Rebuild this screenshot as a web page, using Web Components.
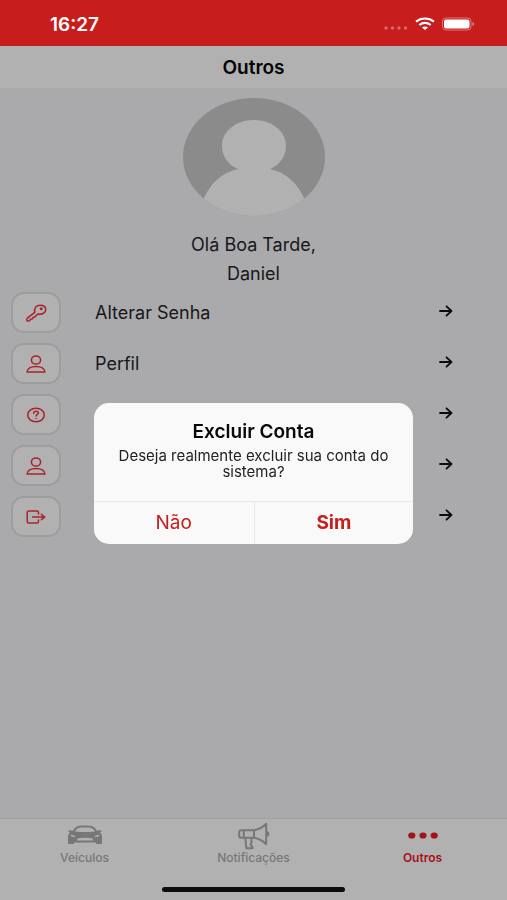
<!DOCTYPE html>
<html lang="pt-BR">
<head>
<meta charset="utf-8">
<meta name="viewport" content="width=device-width, initial-scale=1">
<title>Outros</title>
<style>
    body {
        margin: 0;
        font-family: Inter, "Liberation Sans", sans-serif;
        --red: #c71d1d;
        --dim-red: #a8232b;
        --surface: #b1b1b1;
        --ink: #17171a;
    }
</style>
</head>
<body>
<app-screen>
    <status-bar slot="status" time="16:27"></status-bar>
    <title-bar slot="title">Outros</title-bar>
    <user-greeting>
        <span>Olá Boa Tarde,</span>
        <span>Daniel</span>
    </user-greeting>
    <option-list>
        <option-row icon="key">Alterar Senha</option-row>
        <option-row icon="person">Perfil</option-row>
        <option-row icon="help" label="Ajuda"></option-row>
        <option-row icon="person" label="Excluir Conta"></option-row>
        <option-row icon="exit" label="Sair"></option-row>
    </option-list>
    <tab-bar slot="tabs">
        <tab-item icon="car">Veículos</tab-item>
        <tab-item icon="megaphone">Notificações</tab-item>
        <tab-item icon="dots" active>Outros</tab-item>
    </tab-bar>
    <confirm-dialog slot="dialog">
        <span slot="title">Excluir Conta</span>
        Deseja realmente excluir sua conta do sistema?
        <span slot="cancel">Não</span>
        <span slot="accept">Sim</span>
    </confirm-dialog>
</app-screen>

<script>
// Line icons, drawn with currentColor
const icons = {
    key: `<svg width="22" height="20" viewBox="0 0 22 20" fill="none" stroke="currentColor" stroke-width="1.5" stroke-linejoin="round">
        <path d="M9.800 9.300C8.800 5.500 11 2.200 15 2.200c3.300 0 5.700 1.700 5.700 4.300 0 3.300-3.200 5.200-7.400 4.500l-2 1.300-1.300 1.600-1.800.3-.6 1.600-1.800.2L4.500 17.800 2 18c-.5-1.200-.4-2.200.3-2.800z"/>
        <circle cx="16.200" cy="5.800" r="1.500" fill="currentColor" stroke="none"/></svg>`,
    person: `<svg width="22" height="20" viewBox="0 0 22 20" fill="none" stroke="currentColor" stroke-width="1.5" stroke-linejoin="round">
        <ellipse cx="11" cy="6" rx="4.600" ry="4.100"/>
        <path d="M2 18c.2-3.400 4-5.600 9-5.600s8.800 2.200 9 5.600z"/></svg>`,
    help: `<svg width="22" height="20" viewBox="0 0 22 20" fill="none" stroke="currentColor" stroke-width="1.5" stroke-linecap="round">
        <ellipse cx="11" cy="10" rx="8.300" ry="6.800"/>
        <path d="M8.700 8.200c.1-1.300 1-2 2.400-2s2.300.8 2.300 1.800c0 1.400-2.300 1.500-2.300 3.100"/>
        <path d="M11.100 13.400v.2"/></svg>`,
    exit: `<svg width="22" height="20" viewBox="0 0 22 20" fill="none" stroke="currentColor" stroke-width="1.5" stroke-linecap="round" stroke-linejoin="round">
        <path d="M13.500 7V5.500c0-1-.6-1.500-1.700-1.500H3.900C2.800 4 2.200 4.500 2.200 5.500v9c0 1 .6 1.500 1.700 1.500h7.900c1.100 0 1.700-.5 1.700-1.500V13"/>
        <path d="M7.500 10h12.200M16.400 7.300l3.400 2.700-3.400 2.700"/></svg>`,
    arrow: `<svg width="16" height="14" viewBox="0 0 16 14" fill="none" stroke="currentColor" stroke-width="1.8" stroke-linecap="round" stroke-linejoin="round">
        <path d="M2 7h11.500M8.500 2.300l5 4.700-5 4.700"/></svg>`,
    car: `<svg width="36" height="28" viewBox="0 0 36 28" fill="currentColor">
        <path fill-rule="evenodd" d="M3.200 10.300C1 10.200.8 8.400 3 8.300l3 .4C8.300 5 10.200 4 13 3.800c3-.3 7-.3 10 0 2.800.2 4.700 1.200 7 4.900l3-.4c2.200.1 2 1.900-.2 2 1.400 1.300 2.200 2.600 2.200 5.200v5.300c0 .8-.5 1.200-1.300 1.200h-3.500c-.8 0-1.300-.4-1.300-1.200v-.3H7.100v.3c0 .8-.5 1.200-1.300 1.200H2.300C1.500 22 1 21.600 1 20.800v-5.300c0-2.600.8-3.900 2.200-5.200zM8 9.500c6.500.8 13.500.8 20 0-1.600-2.500-2.900-3.600-5.300-3.900-2.900-.3-6.500-.3-9.400 0C10.900 5.900 9.600 7 8 9.500zM3.300 12.800c.5 1.500 2 2.300 5 2.400 0-1.300-2-2.400-5-2.400zm29.400 0c-3 0-5 1.100-5 2.400 3-.1 4.500-.9 5-2.400zM11 16.200l-1.300 2.200h16.600L25 16.200c-4.300-.7-9.700-.7-14 0z"/></svg>`,
    megaphone: `<svg width="36" height="28" viewBox="0 0 36 28" fill="none" stroke="currentColor" stroke-width="2" stroke-linejoin="round">
        <path d="M18 8.300H5.300c-1.500 0-2.100.8-2.100 2v3.400c0 1.200.6 2 2.100 2H18zM7.800 8.300v7.400M18 8.300c4.500-.8 9-3.100 12.200-6.500v20.400C27 18.800 22.500 16.500 18 15.700M31 10c2 .3 2 3.700 0 4"/>
        <path d="M9.300 16l1 10.200h5.400c.8 0 1-.6.500-1.300l-1.500-2.300c-.6-1 .8-1.400.8-2.600V16"/></svg>`,
    dots: `<svg width="36" height="28" viewBox="0 0 36 28" fill="currentColor">
        <ellipse cx="6.800" cy="13.500" rx="3.600" ry="3.100"/><ellipse cx="18" cy="13.500" rx="3.600" ry="3.100"/><ellipse cx="29.200" cy="13.500" rx="3.600" ry="3.100"/></svg>`
};

class BaseElement extends HTMLElement {
    constructor(){
        super();
        this.attachShadow({mode: 'open'});
    }

    connectedCallback(){
        const template = document.createElement('template');
        template.innerHTML = this.render();
        this.shadowRoot.replaceChildren(template.content.cloneNode(true));
    }
}

class AppScreen extends BaseElement {
    render(){
        return `
<style>
    :host {
        display: flex;
        flex-direction: column;
        min-height: 100vh;
        background: #aaaaac;
        color: var(--ink);
    }
    main { flex: 1; padding: 10px 0; }
</style>
<slot name="status"></slot>
<slot name="title"></slot>
<main><slot></slot></main>
<slot name="tabs"></slot>
<slot name="dialog"></slot>`;
    }
}

class StatusBar extends BaseElement {
    render(){
        return `
<style>
    :host {
        display: flex;
        justify-content: space-between;
        align-items: center;
        box-sizing: border-box;
        height: 46px;
        padding: 2px 32px 0 50px;
        background: var(--red);
        color: #fff;
        font-size: 19px;
        font-weight: 600;
    }
    div { display: flex; align-items: center; gap: 6px; }
</style>
<time>${this.getAttribute('time')}</time>
<div>
    <svg width="26" height="14" viewBox="0 0 26 14" fill="#fff" fill-opacity=".35">
        <circle cx="3" cy="11" r="1.700"/><circle cx="9.500" cy="11" r="1.700"/><circle cx="16" cy="11" r="1.700"/><circle cx="22.500" cy="11" r="1.700"/>
    </svg>
    <svg width="20" height="14" viewBox="0 0 20 14" fill="none" stroke="#fff" stroke-width="2.200">
        <path d="M1 4.700c5-4.300 13-4.300 18 0M4.300 8c3.300-2.800 8.100-2.800 11.400 0"/>
        <path d="M7 10.400c1.800-1.300 4.200-1.300 6 0l-3 2.600z" fill="#fff" stroke="none"/>
    </svg>
    <svg width="34" height="14" viewBox="0 0 34 14">
        <rect x="1.500" y="1" width="28.500" height="12" rx="3.500" fill="none" stroke="#fff" stroke-opacity=".4"/>
        <rect x="3" y="2.500" width="25.500" height="9" rx="2" fill="#fff"/>
        <path d="M31.500 5c2 .6 2 3.400 0 4z" fill="#fff" fill-opacity=".5"/>
    </svg>
</div>`;
    }
}

class TitleBar extends BaseElement {
    render(){
        return `
<style>
    :host { display: block; background: var(--surface); }
    h1 {
        margin: 0;
        padding-top: 2px;
        font-size: 19px;
        font-weight: 600;
        line-height: 40px;
        text-align: center;
        color: #050505;
    }
</style>
<h1><slot></slot></h1>`;
    }
}

class UserGreeting extends BaseElement {
    render(){
        return `
<style>
    :host {
        display: flex;
        flex-direction: column;
        align-items: center;
        font-size: 18px;
        line-height: 29px;
    }
    svg { margin-bottom: 14px; }
</style>
<svg width="142" height="118" viewBox="0 0 142 118" role="img" aria-label="Foto">
    <clipPath id="face"><ellipse cx="71" cy="59" rx="71" ry="59"/></clipPath>
    <g clip-path="url(#face)">
        <rect width="142" height="118" fill="#8b8b8b"/>
        <path fill="#b1b1b1" d="M55 71C45 67 39 58 39 48c0-15 14-26 32-26s32 11 32 26c0 10-6 19-16 23 17 4 27 14 34 29v18H21v-18c7-15 17-25 34-29z"/>
    </g>
</svg>
<slot></slot>`;
    }
}

class OptionList extends BaseElement {
    connectedCallback(){
        super.connectedCallback();
        this.setAttribute('role', 'list');
    }

    render(){
        return `
<style>
    :host {
        display: flex;
        flex-direction: column;
        gap: 10px;
        padding: 4px 53px 0 11px;
    }
</style>
<slot></slot>`;
    }
}

class OptionRow extends BaseElement {
    connectedCallback(){
        super.connectedCallback();
        this.setAttribute('role', 'listitem');
        const label = this.getAttribute('label');
        if(label){
            this.shadowRoot.querySelector('button').setAttribute('aria-label', label);
        }
    }

    render(){
        return `
<style>
    :host { display: block; }
    button {
        display: grid;
        grid-template-columns: 50px 1fr auto;
        align-items: center;
        column-gap: 34px;
        width: 100%;
        padding: 0;
        border: 0;
        background: none;
        color: inherit;
        font: inherit;
        font-size: 18px;
        text-align: left;
    }
    .icon {
        display: flex;
        align-items: center;
        justify-content: center;
        box-sizing: border-box;
        height: 41px;
        border: 2px solid #9d9d9e;
        border-radius: 13px;
        background: var(--surface);
        color: var(--dim-red);
    }
    .arrow { display: flex; padding-bottom: 4px; color: #0c0c0c; }
</style>
<button type="button">
    <span class="icon">${icons[this.getAttribute('icon')]}</span>
    <span><slot></slot></span>
    <span class="arrow">${icons.arrow}</span>
</button>`;
    }
}

class TabBar extends BaseElement {
    render(){
        return `
<style>
    :host {
        display: block;
        padding-bottom: 8px;
        border-top: 1px solid #a2a2a4;
        background: var(--surface);
    }
    nav { display: grid; grid-template-columns: repeat(3, 1fr); }
    .home {
        width: 36%;
        height: 5px;
        margin: 21px auto 0;
        border-radius: 3px;
        background: #0d0d0d;
    }
</style>
<nav><slot></slot></nav>
<div class="home"></div>`;
    }
}

class TabItem extends BaseElement {
    render(){
        return `
<style>
    :host { display: block; color: #777; }
    :host([active]) { color: #a3121a; }
    a {
        display: flex;
        flex-direction: column;
        align-items: center;
        padding-top: 3px;
        color: inherit;
        font-size: 12px;
        font-weight: 500;
        line-height: 16px;
        text-decoration: none;
    }
    :host([active]) a { font-weight: 600; }
</style>
<a href="#">${icons[this.getAttribute('icon')]}<span><slot></slot></span></a>`;
    }
}

class ConfirmDialog extends BaseElement {
    render(){
        return `
<style>
    /* covers everything under the status bar */
    :host {
        position: fixed;
        inset: 46px 0 0;
        display: flex;
        align-items: center;
        justify-content: center;
    }
    dialog {
        position: static;
        width: 63%;
        margin: 0;
        padding: 0;
        border: 0;
        border-radius: 15px;
        overflow: hidden;
        background: #f9f9f9;
        text-align: center;
    }
    .body { padding: 17px 20px 21px; }
    h2 { margin: 0; font-size: 19px; font-weight: 600; line-height: 24px; color: #080808; }
    p { margin: 4px 0 0; font-size: 15px; line-height: 16px; color: #222; }
    .actions { display: grid; grid-template-columns: 1fr 1fr; border-top: 1px solid #e8e8e8; }
    button {
        height: 42px;
        padding: 0;
        border: 0;
        background: none;
        color: var(--red);
        font: inherit;
        font-size: 19px;
    }
    .accept { border-left: 1px solid #e8e8e8; font-weight: 700; }
</style>
<dialog open aria-labelledby="title">
    <div class="body">
        <h2 id="title"><slot name="title"></slot></h2>
        <p><slot></slot></p>
    </div>
    <div class="actions">
        <button type="button" class="cancel"><slot name="cancel"></slot></button>
        <button type="button" class="accept"><slot name="accept"></slot></button>
    </div>
</dialog>`;
    }
}

window.customElements.define('app-screen', AppScreen);
window.customElements.define('status-bar', StatusBar);
window.customElements.define('title-bar', TitleBar);
window.customElements.define('user-greeting', UserGreeting);
window.customElements.define('option-list', OptionList);
window.customElements.define('option-row', OptionRow);
window.customElements.define('tab-bar', TabBar);
window.customElements.define('tab-item', TabItem);
window.customElements.define('confirm-dialog', ConfirmDialog);
</script>
</body>
</html>
